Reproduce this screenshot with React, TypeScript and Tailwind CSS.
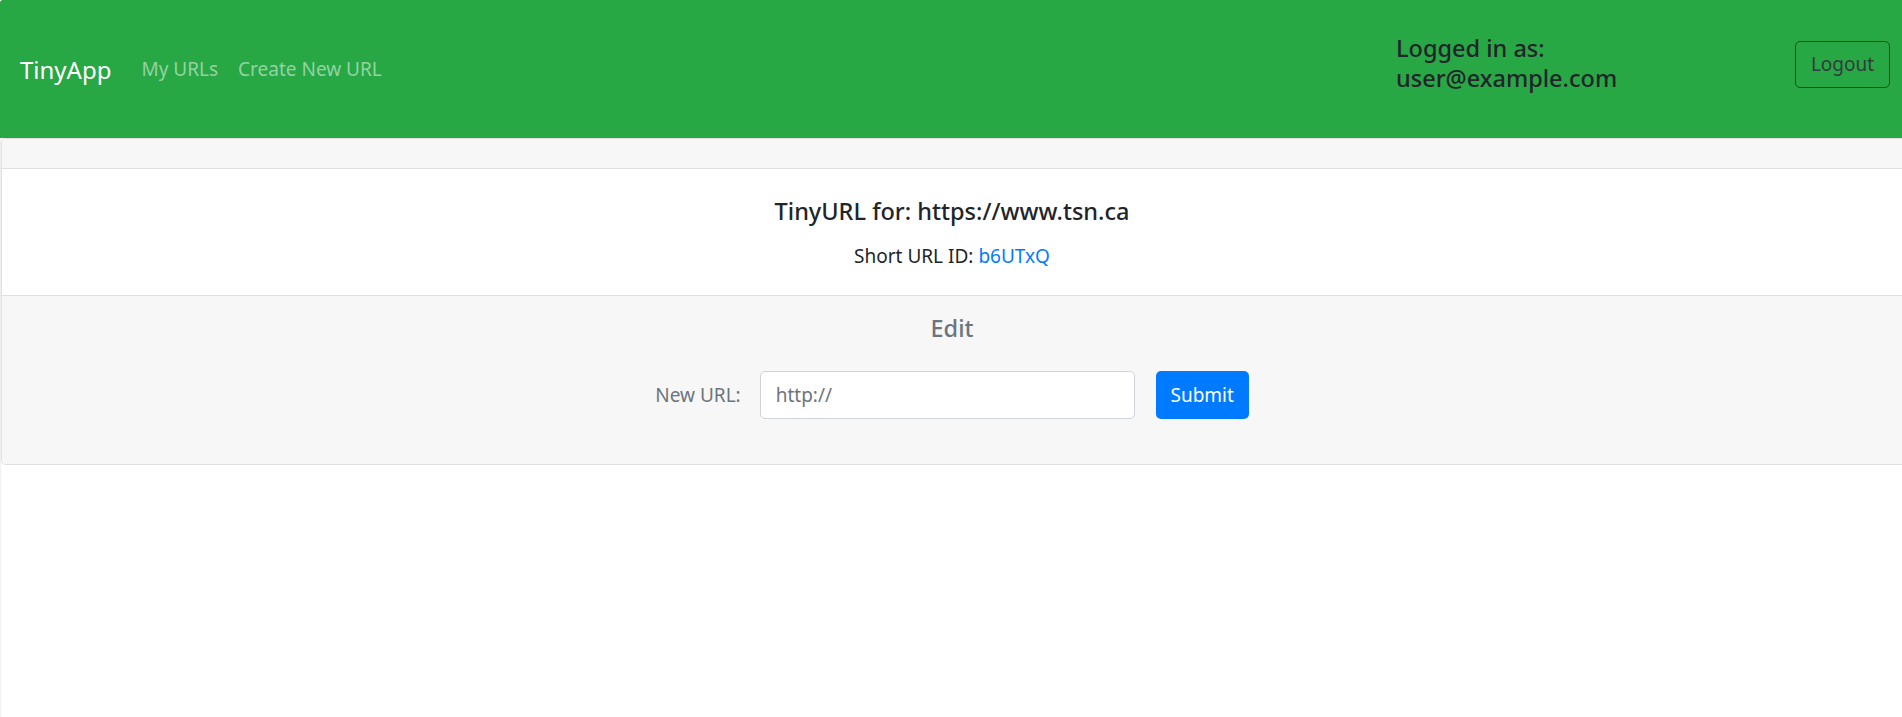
import React from "react";

const font = { fontFamily: '"Segoe UI", "Noto Sans", "Liberation Sans", sans-serif' };

function Navbar() {
  return (
    <nav className="flex h-[138px] items-center rounded-tl-[3px] bg-[#28a745] pl-[20px] pr-[12px]">
      <a href="#" className="mr-[20px] text-[24px] leading-[37px] text-white">
        TinyApp
      </a>
      <div className="flex items-center">
        <a href="#" className="px-[10px] text-[19px] leading-[30px] text-[#93d3a2]">
          My URLs
        </a>
        <a href="#" className="px-[10px] text-[19px] leading-[30px] text-[#93d3a2]">
          Create New URL
        </a>
      </div>
      <div className="ml-auto flex items-center">
        <h5 className="mb-[13px] w-[399px] text-[23.5px] font-medium leading-[30px] text-[#212529]">
          Logged in as:
          <br />
          user@example.com
        </h5>
        <button
          type="button"
          className="mb-[10px] h-[47px] w-[95px] rounded-[5px] border border-[#343a40] text-[19px] leading-[30px] text-[#343a40]"
        >
          Logout
        </button>
      </div>
    </nav>
  );
}

function UrlCard() {
  return (
    <div className="rounded-l-[5px] border-y border-l border-[#dfdfdf]">
      <div className="h-[30px] rounded-tl-[5px] border-b border-[#dfdfdf] bg-[#f7f7f7]" />
      <div className="flex flex-col items-center border-b border-[#dfdfdf] bg-white pb-[24px] pt-[27px]">
        <h5 className="text-[23.5px] font-medium leading-[30px] text-[#212529]">TinyURL for: https://www.tsn.ca</h5>
        <p className="mt-[15px] text-[19px] leading-[30px] text-[#212529]">
          Short URL ID:{" "}
          <a href="#" className="text-[#007bff]">
            b6UTxQ
          </a>
        </p>
      </div>
      <div className="flex flex-col items-center rounded-bl-[5px] bg-[#f7f7f7] pb-[45px] pt-[17px]">
        <h5 className="text-[23.5px] font-medium leading-[30px] text-[#6c757d]">Edit</h5>
        <form className="mt-[28px] flex items-center" onSubmit={(e) => e.preventDefault()}>
          <label htmlFor="longURL" className="mr-[19px] text-[19px] leading-[30px] text-[#6c757d]">
            New URL:
          </label>
          <input
            id="longURL"
            type="text"
            placeholder="http://"
            className="h-[48px] w-[375px] rounded-[5px] border border-[#ced4da] bg-white px-[15px] text-[19px] text-[#495057] placeholder:text-[#6c757d] focus:outline-none"
          />
          <button
            type="submit"
            className="ml-[21px] h-[48px] w-[93px] rounded-[5px] bg-[#007bff] text-[19px] leading-[30px] text-white"
          >
            Submit
          </button>
        </form>
      </div>
    </div>
  );
}

export default function App() {
  return (
    <div className="h-[717px] overflow-hidden bg-white" style={font}>
      <Navbar />
      <main className="h-full border-l border-[#f0f0f0]">
        <UrlCard />
      </main>
    </div>
  );
}
